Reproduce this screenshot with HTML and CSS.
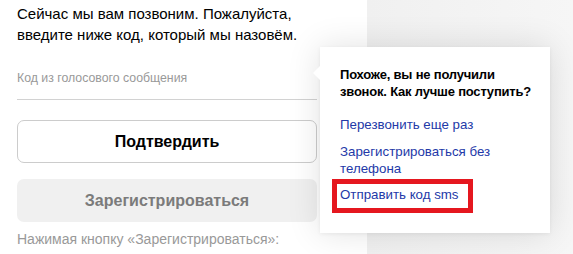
FILE: index.html
```html
<!DOCTYPE html>
<html lang="ru">

<head>
    <meta charset="UTF-8">
    <meta name="viewport" content="width=device-width, initial-scale=1.0">
    <title>Регистрация</title>
    <link rel="stylesheet" href="styles.css">
</head>

<body>
    <div class="page">
        <!-- Registration form -->
        <div class="panel">
            <p class="intro">Сейчас мы вам позвоним. Пожалуйста,<br>введите ниже код, который мы назовём.</p>

            <div class="field">
                <span class="placeholder">Код из голосового сообщения</span>
            </div>

            <button class="btn btn-confirm" type="button">Подтвердить</button>
            <button class="btn btn-register" type="button">Зарегистрироваться</button>

            <p class="terms">Нажимая кнопку «Зарегистрироваться»:</p>
        </div>

        <div class="side"></div>

        <!-- Popup: no call received -->
        <div class="popup">
            <p class="popup-title">Похоже, вы не получили<br>звонок. Как лучше поступить?</p>
            <a class="popup-link link-first" href="#">Перезвонить еще раз</a>
            <a class="popup-link link-second" href="#">Зарегистрироваться без<br>телефона</a>
            <span class="mark"><a class="popup-link" href="#">Отправить код sms</a></span>
        </div>
    </div>
</body>

</html>
```

FILE: styles.css
```css
/* Reset CSS */
* {
    box-sizing: border-box;
    margin: 0;
    padding: 0;
}

body {
    font-family: "Liberation Sans", Arial, sans-serif;
    background-color: #f3f3f3;
    color: #000;
    width: 573px;
    height: 254px;
    overflow: hidden;
}

.page {
    position: relative;
    display: flex;
    height: 254px;
}

.panel {
    width: 367px;
    background-color: #fff;
    padding: 4px 50px 0 17px;
    display: flex;
    flex-direction: column;
}

.side {
    flex: 1;
    background: linear-gradient(to right, #f0f0f0, #f6f6f6);
}

.intro {
    font-size: 15px;
    line-height: 20.5px;
    white-space: nowrap;
}

.field {
    margin-top: 25px;
    padding-bottom: 13px;
    border-bottom: 1px solid #d2d2d2;
    width: 300px;
}

.placeholder {
    display: block;
    font-size: 12.3px;
    line-height: 16px;
    color: #999;
}

.btn {
    width: 300px;
    height: 43px;
    border-radius: 7px;
    font-family: inherit;
    font-size: 16px;
    font-weight: bold;
    cursor: pointer;
}

.btn-confirm {
    margin-top: 20px;
    background-color: #fff;
    border: 1px solid #ccc;
    color: #000;
}

.btn-register {
    margin-top: 16px;
    background-color: #f0f0f0;
    border: none;
    color: #7b7b7b;
}

.terms {
    margin-top: 9px;
    font-size: 14px;
    line-height: 17px;
    color: #999;
}

.popup {
    position: absolute;
    left: 320px;
    top: 47px;
    width: 230px;
    height: 186px;
    padding: 19px 10px 0 20px;
    background-color: #fff;
    box-shadow: 0 0 32px rgba(0, 0, 0, 0.12), 0 1px 4px rgba(0, 0, 0, 0.06);
    display: flex;
    flex-direction: column;
    align-items: flex-start;
}

.popup::before {
    content: "";
    position: absolute;
    left: -7px;
    top: 19px;
    border-top: 7px solid transparent;
    border-bottom: 7px solid transparent;
    border-right: 7px solid #fff;
}

.popup-title {
    font-size: 13px;
    line-height: 17px;
    font-weight: bold;
    letter-spacing: -0.2px;
    white-space: nowrap;
}

.popup-link {
    font-size: 13.3px;
    line-height: 17px;
    color: #2339a8;
    text-decoration: none;
}

.link-first {
    margin-top: 16px;
}

.link-second {
    margin-top: 10px;
}

.mark {
    display: inline-block;
    margin-top: 2px;
    margin-left: -8px;
    padding: 2px 9px 5px 3px;
    border: 5px solid #e5171f;
}

.mark .popup-link {
    display: block;
}
```
